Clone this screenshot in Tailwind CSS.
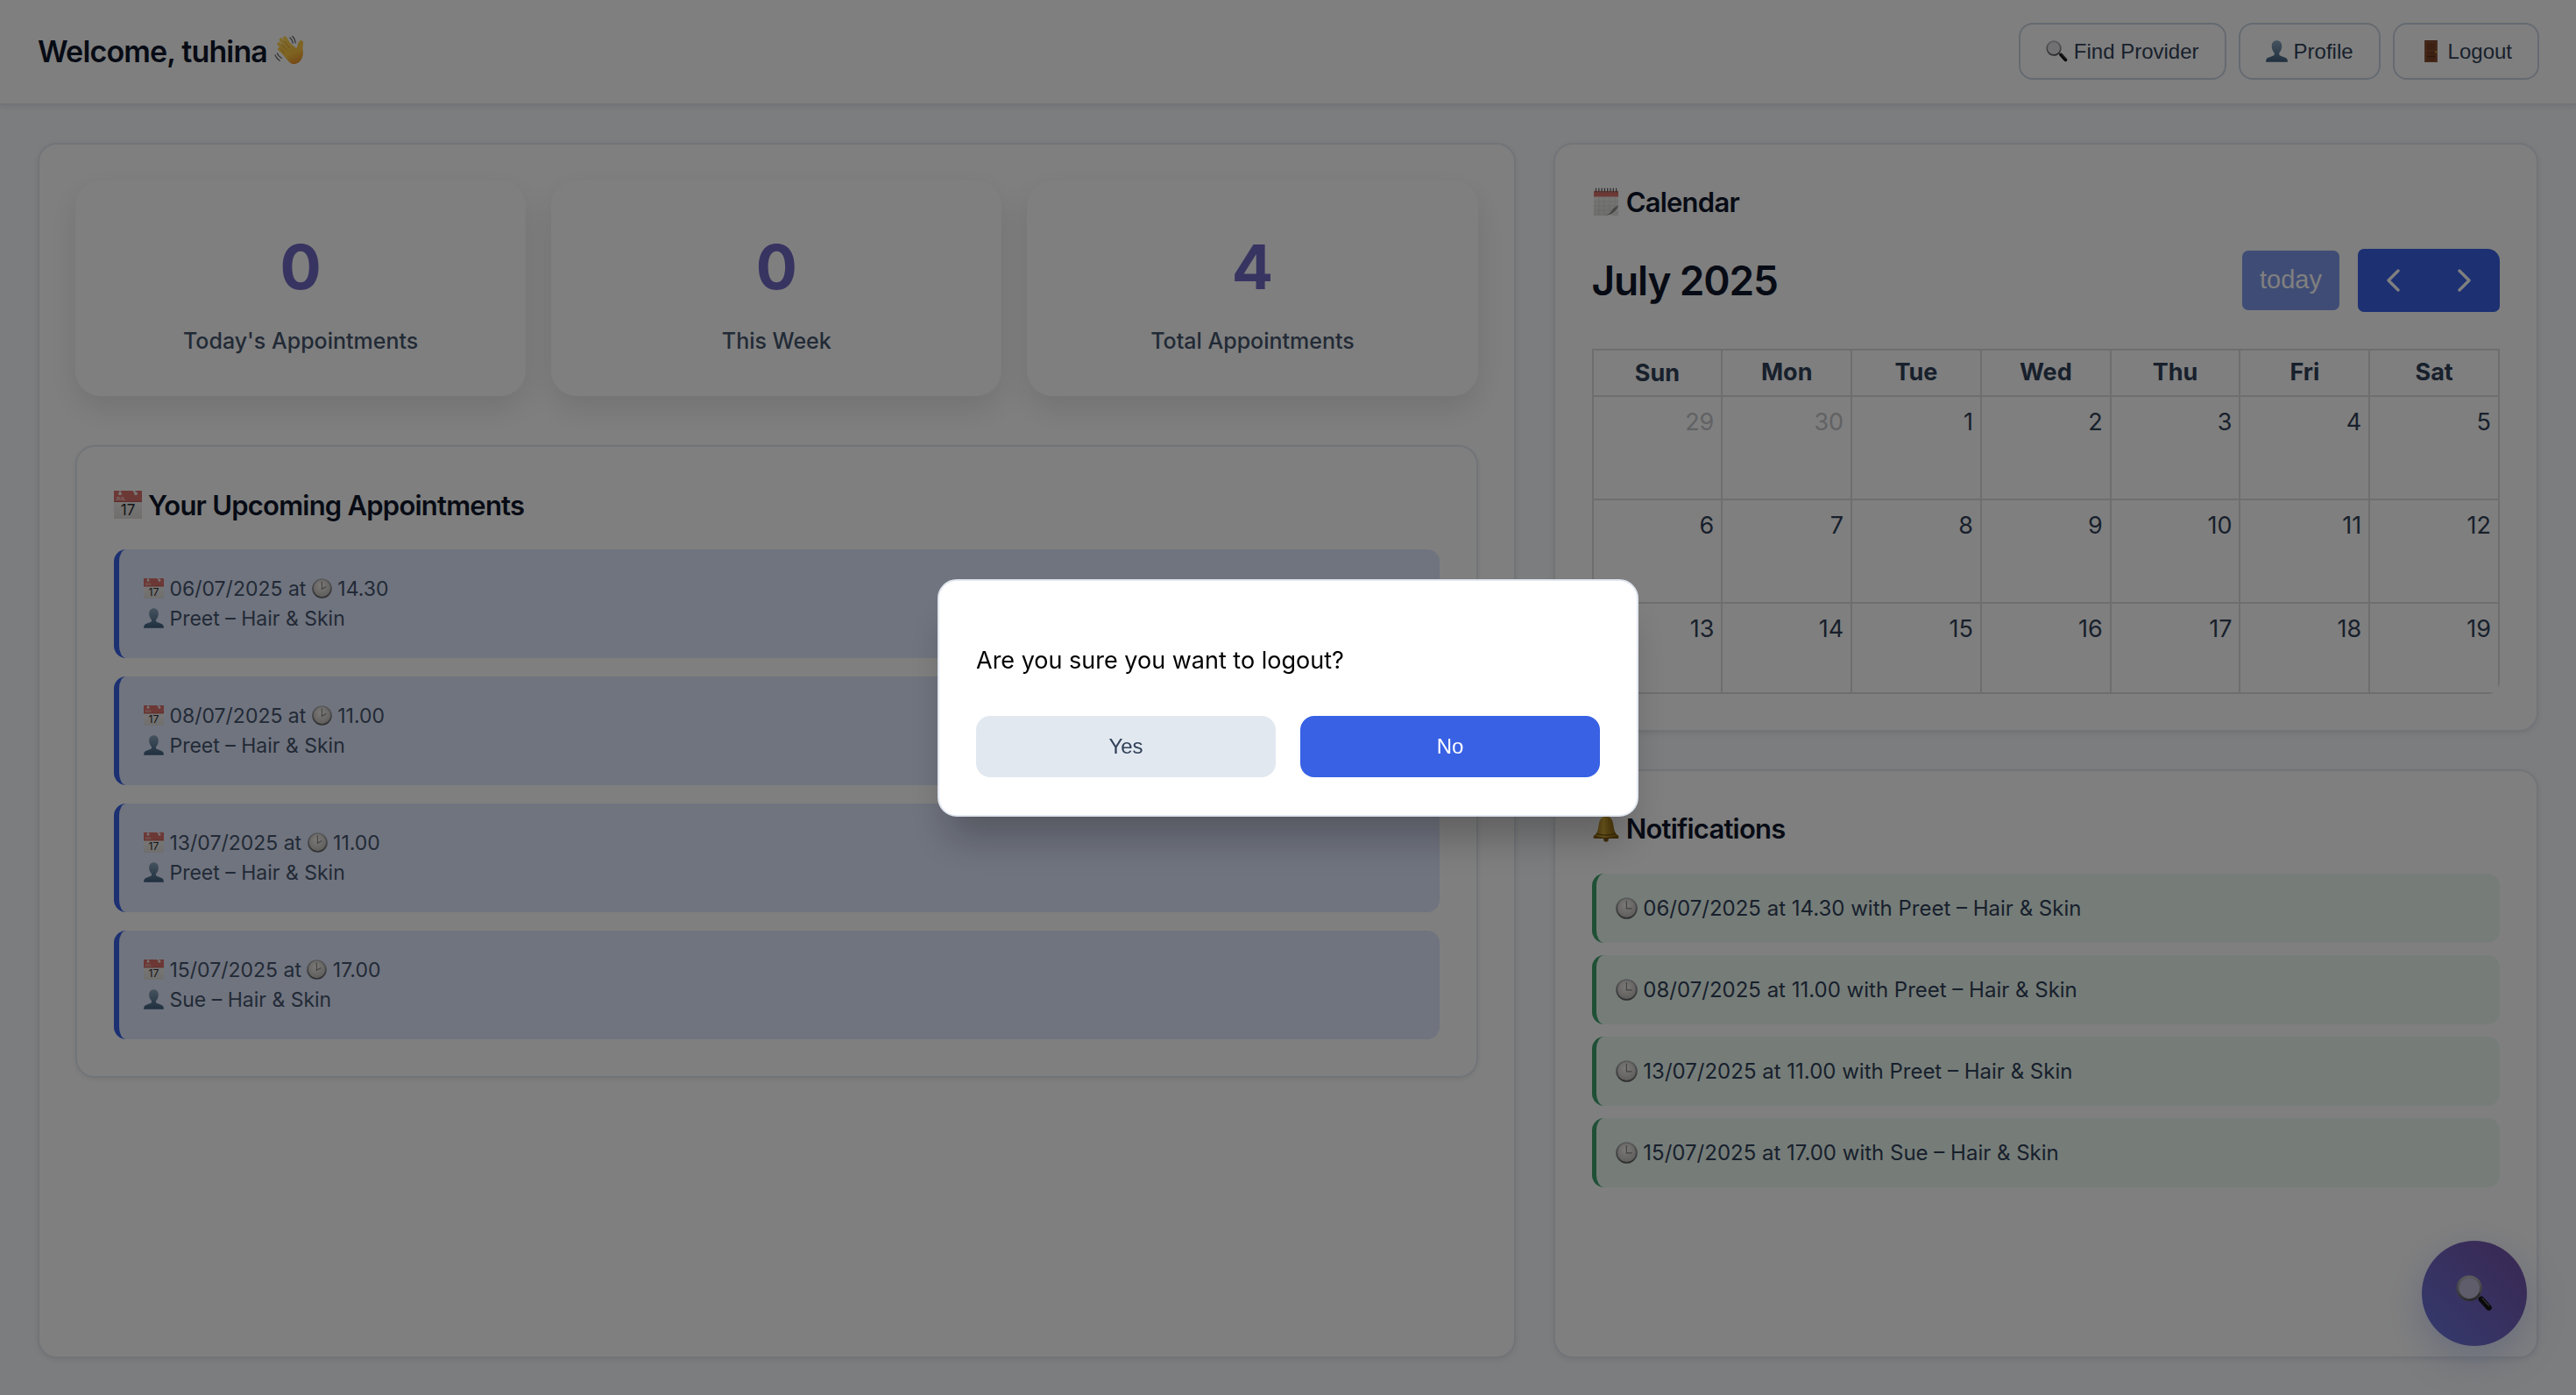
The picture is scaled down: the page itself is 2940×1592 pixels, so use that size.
<!DOCTYPE html>
<html lang="en">
<head>
<meta charset="utf-8">
<meta name="viewport" content="width=device-width, initial-scale=1">
<title>Dashboard</title>
<script src="https://cdn.jsdelivr.net/npm/@tailwindcss/browser@4"></script>
</head>
<body class="font-['Inter','Liberation_Sans',sans-serif] bg-slate-50 text-slate-700">

<!-- Icon library -->
<svg class="absolute size-0" aria-hidden="true">
  <defs>
    <linearGradient id="skin" gradientUnits="userSpaceOnUse" x1="8" y1="2" x2="24" y2="35"><stop offset="0" stop-color="#ffd95e"/><stop offset="0.65" stop-color="#fbc440"/><stop offset="1" stop-color="#ec8f2a"/></linearGradient>
    <linearGradient id="bust" x1="0" y1="0" x2="0" y2="1"><stop offset="0" stop-color="#8aa6bd"/><stop offset="1" stop-color="#3f5f7e"/></linearGradient>
    <linearGradient id="brass" x1="0" y1="0" x2="1" y2="0"><stop offset="0" stop-color="#8f6a16"/><stop offset="0.4" stop-color="#e2b63c"/><stop offset="0.6" stop-color="#b98d22"/><stop offset="1" stop-color="#7c5a12"/></linearGradient>
    <linearGradient id="rim" x1="0" y1="0" x2="0" y2="1"><stop offset="0" stop-color="#b4b6b9"/><stop offset="1" stop-color="#5f6062"/></linearGradient>
    <radialGradient id="dial" cx="0.45" cy="0.35" r="0.65"><stop offset="0" stop-color="#f4f2ee"/><stop offset="1" stop-color="#bdbbb6"/></radialGradient>
    <linearGradient id="page" x1="0" y1="0" x2="0" y2="1"><stop offset="0" stop-color="#efeeec"/><stop offset="1" stop-color="#dedddb"/></linearGradient>
  </defs>
  <symbol id="i-wave" viewBox="0 0 36 36">
    <g fill="none" stroke="url(#skin)" stroke-linecap="round">
      <path d="M14 18 5.500 10.500" stroke-width="4.200"/>
      <path d="M16 16 8 5.500" stroke-width="4.400"/>
      <path d="M19 14 12.500 3.500" stroke-width="4.400"/>
      <path d="M13 22 6 16.500" stroke-width="4"/>
    </g>
    <path fill="url(#skin)" d="M6 18 Q4.500 16 6 14.500 L17 8 L24.500 14.500 Q26.500 16.500 27 13 Q27.500 9 30 6.800 Q32 5.200 33.500 7.200 Q34.500 9 33.600 12.500 Q33.200 16 33.800 19.500 Q34.500 27 29 32 Q23 36.500 17.500 31.500 Z"/>
    <path fill="none" stroke="#c98420" stroke-width="0.700" stroke-linecap="round" d="M8 17 12 20.500M8.500 11.500 14.500 17M11.500 7 18 15"/>
    <path fill="none" stroke="#5e5e5e" stroke-width="1.300" stroke-linecap="round" d="M21.500 1.500Q24.500 4.500 25 9M18.500 3Q21.500 5.500 22 9.500M1 23.500Q2.500 27.500 6.500 30M3.500 21.500Q5 25 8.500 27"/>
  </symbol>
  <symbol id="i-search" viewBox="0 0 36 36">
    <path stroke="#6d6d6d" stroke-width="2" d="m20.500 20.500 4 4"/>
    <path stroke="#141414" stroke-width="5.600" stroke-linecap="round" d="m24.800 23.800 7.400 8.200"/>
    <path stroke="#666" stroke-width="1" stroke-linecap="round" d="m25.600 22.800 6.600 7.200"/>
    <circle cx="13" cy="13" r="11.300" fill="#d9d6df" fill-opacity="0.750" stroke="url(#rim)" stroke-width="2.400"/>
    <path fill="none" stroke="#3c3c3c" stroke-width="0.800" d="M23.500 17.500A11.600 11.600 0 0 1 13 24.800"/>
  </symbol>
  <symbol id="i-user" viewBox="0 0 36 36">
    <path fill="url(#bust)" d="M18 .500c5.200 0 8.300 3.900 8.300 9.300 0 4.300-1.600 8-3.900 10.200-.6.600-.7 3.600.2 4.400 2.400 1.900 10.900 3.100 12.500 6.600.6 1.400.7 3 .7 4.700H.200c0-1.700.1-3.300.7-4.700 1.600-3.500 10.100-4.700 12.500-6.600.9-.8.800-3.800.2-4.400-2.300-2.200-3.900-5.900-3.900-10.200C9.700 4.400 12.800.500 18 .500Z"/>
  </symbol>
  <symbol id="i-door" viewBox="0 0 36 36">
    <path fill="#6e3a22" d="M7.500 0h21v36h-21z"/>
    <path fill="#8d5030" d="M9 1.500h18V36H9z"/>
    <path fill="#794125" d="M11 4h14v12.500H11z"/>
    <path fill="#5c2f1a" d="M11 19h14v1.400H11zM11 26h14v1.400H11z"/>
    <path fill="#794125" d="M11 20.500h14V26H11zM11 27.500h14v6H11z"/>
    <circle cx="26.500" cy="19" r="1.800" fill="#c99a3c"/>
  </symbol>
  <symbol id="i-date" viewBox="0 0 32 32">
    <path fill="url(#page)" d="M0 12h32v20H0z"/>
    <path fill="#d9716b" d="M0 0h32v13H0z"/>
    <path fill="#b55a55" d="M0 11.800h32v1H0z"/>
    <g fill="#f3efee"><circle cx="7" cy="3.300" r="1.900"/><path d="M6.300 0h1.400v3H6.300z"/><circle cx="25" cy="3.300" r="1.900"/><path d="M21 0h3l2 2.500-1.500.8z"/></g>
  </symbol>
  <symbol id="i-spiral" viewBox="0 0 32 32">
    <path fill="url(#page)" d="M2 9h28v14q-5 7-15 9H2z"/>
    <path fill="#d9716b" d="M2 4h28v6.500H2z"/>
    <path stroke="#555" stroke-width="1.200" stroke-linecap="round" d="M4.500 1v4M7.800 1v4M11.100 1v4M14.400 1v4M17.700 1v4M21 1v4M24.300 1v4M27.600 1v4"/>
    <path stroke="#cfcfcf" stroke-width="0.600" fill="none" d="M2 16h28M2 21h28M2 26h20M8 10.500V32M14 10.500V32M20 10.500V28M26 10.500V24"/>
    <path fill="#8f8f8f" d="M30 20.500C26 22 23.500 24 22 27q-2 3.500-8 5 8-.5 12-4.500 3-3 4-7z"/>
    <path fill="#e2e1df" d="M30 23.500q-2.500 5.500-9 8.500h9z"/>
  </symbol>
  <symbol id="i-clock-two" viewBox="0 0 32 32">
    <circle cx="16" cy="16" r="14.600" fill="url(#dial)" stroke="url(#rim)" stroke-width="2.400"/>
    <path fill="none" stroke="#85837e" stroke-width="1.500" d="M15.800 5v12l6.800-3.800"/>
  </symbol>
  <symbol id="i-clock-three" viewBox="0 0 32 32">
    <circle cx="16" cy="16" r="14.600" fill="url(#dial)" stroke="url(#rim)" stroke-width="2.400"/>
    <path fill="none" stroke="#85837e" stroke-width="1.500" d="M15.800 5v11.500h8"/>
  </symbol>
  <symbol id="i-bell" viewBox="0 0 32 32">
    <circle cx="16" cy="2.600" r="1.900" fill="#b98d22"/>
    <circle cx="16" cy="29" r="2.800" fill="#7f5a18"/>
    <path fill="url(#brass)" d="M16 2.500c5.400 0 7.600 4.500 8.300 9.500.7 5.500 1.500 9.500 5.200 12.200 1.600 1.200 1.300 3.800-1 3.800H3.500c-2.300 0-2.600-2.600-1-3.800C6.200 21.500 7 17.500 7.700 12 8.400 7 10.600 2.500 16 2.500Z"/>
    <path fill="none" stroke="#6b4c10" stroke-width="1.200" d="M5.500 22.500q10.500 3.200 21 0M2.800 26.200q13.200 2.600 26.400 0"/>
  </symbol>
</svg>

<div class="min-h-screen flex flex-col">
  <header class="flex items-center justify-between bg-white border-b-2 border-slate-200 pl-[43px] pr-[42px] pt-[26px] pb-[27px] shadow-[0_2px_6px_rgba(0,0,0,0.08)]">
    <h1 class="text-[34px] leading-[54px] font-semibold tracking-tight text-slate-900">Welcome, tuhina <svg class="inline-block size-[35px] align-[-4px]" aria-hidden="true"><use href="#i-wave"/></svg></h1>
    <nav class="flex gap-[14px] font-['Liberation_Sans',sans-serif]">
      <button class="flex items-center gap-[7px] h-[65px] px-[29px] rounded-[16px] border-2 border-slate-300 bg-white text-[24px]"><svg class="size-[25px]" aria-hidden="true"><use href="#i-search"/></svg>Find Provider</button>
      <button class="flex items-center gap-[7px] h-[65px] px-[29px] rounded-[16px] border-2 border-slate-300 bg-white text-[24px]"><svg class="size-[25px]" aria-hidden="true"><use href="#i-user"/></svg>Profile</button>
      <button class="flex items-center gap-[7px] h-[65px] px-[29px] rounded-[16px] border-2 border-slate-300 bg-white text-[24px]"><svg class="size-[25px]" aria-hidden="true"><use href="#i-door"/></svg>Logout</button>
    </nav>
  </header>

  <main class="flex-1 grid grid-cols-[3fr_2fr] gap-[43px] p-[43px]">
    <section class="min-w-0 bg-white border-2 border-slate-200 rounded-[22px] p-[41px] shadow-[0_2px_6px_rgba(0,0,0,0.08)]">
      <div class="grid grid-cols-3 gap-[29px] mb-[56px] text-center">
        <div class="bg-white rounded-[29px] p-[43px] shadow-[0_14px_36px_rgba(0,0,0,0.11)]">
          <p class="text-[70px] leading-[112px] font-bold text-[#7068c2]">0</p>
          <p class="mt-[8px] text-[25px] leading-[40px] font-medium text-slate-600">Today's Appointments</p>
        </div>
        <div class="bg-white rounded-[29px] p-[43px] shadow-[0_14px_36px_rgba(0,0,0,0.11)]">
          <p class="text-[70px] leading-[112px] font-bold text-[#7068c2]">0</p>
          <p class="mt-[8px] text-[25px] leading-[40px] font-medium text-slate-600">This Week</p>
        </div>
        <div class="bg-white rounded-[29px] p-[43px] shadow-[0_14px_36px_rgba(0,0,0,0.11)]">
          <p class="text-[70px] leading-[112px] font-bold text-[#7068c2]">4</p>
          <p class="mt-[8px] text-[25px] leading-[40px] font-medium text-slate-600">Total Appointments</p>
        </div>
      </div>

      <section class="bg-white border-2 border-slate-200 rounded-[22px] p-[42px] shadow-[0_2px_6px_rgba(0,0,0,0.08)]">
        <h2 class="mb-[25px] text-[31px] leading-[50px] font-semibold tracking-tight text-slate-900"><svg class="inline-block size-[32px] align-[-4px]" viewBox="0 0 32 32" aria-hidden="true"><use href="#i-date"/><text x="2" y="11" font-family="Liberation Sans, sans-serif" font-size="6" letter-spacing="0" fill="#f6dedd">JUL</text><text x="16" y="28" text-anchor="middle" letter-spacing="0" font-family="Inter, sans-serif" font-size="17" font-weight="400" fill="#2b2b2b">17</text></svg> Your Upcoming Appointments</h2>
        <ul class="flex flex-col gap-[21px] text-[23px] leading-[34px] text-slate-600">
          <li class="bg-[#e0e8ff] border-l-6 border-[#3861e4] rounded-[14px] p-[28px]">
            <p><svg class="inline-block size-[23px] align-[-3px]" viewBox="0 0 32 32" aria-hidden="true"><use href="#i-date"/><text x="2" y="11" font-family="Liberation Sans, sans-serif" font-size="6" fill="#f6dedd">JUL</text><text x="16" y="28" text-anchor="middle" font-family="Inter, sans-serif" font-size="17" fill="#2b2b2b">17</text></svg> 06/07/2025 at <svg class="inline-block size-[23px] align-[-3px]" aria-hidden="true"><use href="#i-clock-two"/></svg> 14.30</p>
            <p><svg class="inline-block size-[23px] align-[-3px]" aria-hidden="true"><use href="#i-user"/></svg> Preet – Hair &amp; Skin</p>
          </li>
          <li class="bg-[#e0e8ff] border-l-6 border-[#3861e4] rounded-[14px] p-[28px]">
            <p><svg class="inline-block size-[23px] align-[-3px]" viewBox="0 0 32 32" aria-hidden="true"><use href="#i-date"/><text x="2" y="11" font-family="Liberation Sans, sans-serif" font-size="6" fill="#f6dedd">JUL</text><text x="16" y="28" text-anchor="middle" font-family="Inter, sans-serif" font-size="17" fill="#2b2b2b">17</text></svg> 08/07/2025 at <svg class="inline-block size-[23px] align-[-3px]" aria-hidden="true"><use href="#i-clock-two"/></svg> 11.00</p>
            <p><svg class="inline-block size-[23px] align-[-3px]" aria-hidden="true"><use href="#i-user"/></svg> Preet – Hair &amp; Skin</p>
          </li>
          <li class="bg-[#e0e8ff] border-l-6 border-[#3861e4] rounded-[14px] p-[28px]">
            <p><svg class="inline-block size-[23px] align-[-3px]" viewBox="0 0 32 32" aria-hidden="true"><use href="#i-date"/><text x="2" y="11" font-family="Liberation Sans, sans-serif" font-size="6" fill="#f6dedd">JUL</text><text x="16" y="28" text-anchor="middle" font-family="Inter, sans-serif" font-size="17" fill="#2b2b2b">17</text></svg> 13/07/2025 at <svg class="inline-block size-[23px] align-[-3px]" aria-hidden="true"><use href="#i-clock-two"/></svg> 11.00</p>
            <p><svg class="inline-block size-[23px] align-[-3px]" aria-hidden="true"><use href="#i-user"/></svg> Preet – Hair &amp; Skin</p>
          </li>
          <li class="bg-[#e0e8ff] border-l-6 border-[#3861e4] rounded-[14px] p-[28px]">
            <p><svg class="inline-block size-[23px] align-[-3px]" viewBox="0 0 32 32" aria-hidden="true"><use href="#i-date"/><text x="2" y="11" font-family="Liberation Sans, sans-serif" font-size="6" fill="#f6dedd">JUL</text><text x="16" y="28" text-anchor="middle" font-family="Inter, sans-serif" font-size="17" fill="#2b2b2b">17</text></svg> 15/07/2025 at <svg class="inline-block size-[23px] align-[-3px]" aria-hidden="true"><use href="#i-clock-two"/></svg> 17.00</p>
            <p><svg class="inline-block size-[23px] align-[-3px]" aria-hidden="true"><use href="#i-user"/></svg> Sue – Hair &amp; Skin</p>
          </li>
        </ul>
      </section>
    </section>

    <div class="min-w-0 grid grid-rows-2 gap-[43px]">
      <section class="flex flex-col bg-white border-2 border-slate-200 rounded-[22px] px-[42px] py-[41px] shadow-[0_2px_6px_rgba(0,0,0,0.08)]">
        <h2 class="mb-[28px] text-[31px] leading-[50px] font-semibold tracking-tight text-slate-900"><svg class="inline-block size-[32px] align-[-4px]" aria-hidden="true"><use href="#i-spiral"/></svg> Calendar</h2>
        <div class="flex-1 flex flex-col overflow-hidden rounded-[14px]">
          <div class="flex items-center justify-between mb-[42px]">
            <h3 class="text-[46px] leading-[72px] font-semibold tracking-tight text-slate-900">July 2025</h3>
            <div class="flex items-center gap-[21px] text-white text-[29px] font-['Liberation_Sans',sans-serif]">
              <button class="h-[68px] px-[20px] rounded-[7px] bg-[#7e98ea]" disabled>today</button>
              <div class="flex h-[72px] rounded-[7px] overflow-hidden bg-[#3861e4]">
                <button class="w-[81px] flex items-center justify-center" aria-label="Previous month"><svg class="w-[15px] h-[26px]" viewBox="0 0 15 26" fill="none" stroke="currentColor" stroke-width="3.400" stroke-linecap="round" stroke-linejoin="round"><path d="M13 2 2 13l11 11"/></svg></button>
                <button class="w-[81px] flex items-center justify-center" aria-label="Next month"><svg class="w-[15px] h-[26px]" viewBox="0 0 15 26" fill="none" stroke="currentColor" stroke-width="3.400" stroke-linecap="round" stroke-linejoin="round"><path d="m2 2 11 11L2 24"/></svg></button>
              </div>
            </div>
          </div>
          <div class="flex-1">
            <table class="w-full table-fixed border-collapse text-[27px]">
              <thead>
                <tr class="h-[53px]">
                  <th class="border-2 border-[#ddd] font-bold leading-[45px]">Sun</th><th class="border-2 border-[#ddd] font-bold">Mon</th><th class="border-2 border-[#ddd] font-bold">Tue</th><th class="border-2 border-[#ddd] font-bold">Wed</th><th class="border-2 border-[#ddd] font-bold">Thu</th><th class="border-2 border-[#ddd] font-bold">Fri</th><th class="border-2 border-[#ddd] font-bold">Sat</th>
                </tr>
              </thead>
              <tbody class="text-right leading-[46px]">
                <tr class="h-[118px] align-top">
                  <td class="border-2 border-[#ddd] px-[8px] py-[6px] text-[#c2c4c8]">29</td><td class="border-2 border-[#ddd] px-[8px] py-[6px] text-[#c2c4c8]">30</td><td class="border-2 border-[#ddd] px-[8px] py-[6px]">1</td><td class="border-2 border-[#ddd] px-[8px] py-[6px]">2</td><td class="border-2 border-[#ddd] px-[8px] py-[6px]">3</td><td class="border-2 border-[#ddd] px-[8px] py-[6px]">4</td><td class="border-2 border-[#ddd] px-[8px] py-[6px]">5</td>
                </tr>
                <tr class="h-[118px] align-top">
                  <td class="border-2 border-[#ddd] px-[8px] py-[6px]">6</td><td class="border-2 border-[#ddd] px-[8px] py-[6px]">7</td><td class="border-2 border-[#ddd] px-[8px] py-[6px]">8</td><td class="border-2 border-[#ddd] px-[8px] py-[6px]">9</td><td class="border-2 border-[#ddd] px-[8px] py-[6px]">10</td><td class="border-2 border-[#ddd] px-[8px] py-[6px]">11</td><td class="border-2 border-[#ddd] px-[8px] py-[6px]">12</td>
                </tr>
                <tr class="h-[103px] align-top">
                  <td class="border-2 border-[#ddd] px-[8px] py-[6px]">13</td><td class="border-2 border-[#ddd] px-[8px] py-[6px]">14</td><td class="border-2 border-[#ddd] px-[8px] py-[6px]">15</td><td class="border-2 border-[#ddd] px-[8px] py-[6px]">16</td><td class="border-2 border-[#ddd] px-[8px] py-[6px]">17</td><td class="border-2 border-[#ddd] px-[8px] py-[6px]">18</td><td class="border-2 border-[#ddd] px-[8px] py-[6px]">19</td>
                </tr>
              </tbody>
            </table>
          </div>
        </div>
      </section>

      <section class="bg-white border-2 border-slate-200 rounded-[22px] px-[42px] py-[41px] shadow-[0_2px_6px_rgba(0,0,0,0.08)]">
        <h2 class="mb-[26px] text-[31px] leading-[50px] font-semibold tracking-tight text-slate-900"><svg class="inline-block size-[32px] align-[-4px]" aria-hidden="true"><use href="#i-bell"/></svg> Notifications</h2>
        <ul class="flex flex-col gap-[14px] text-[24px] leading-[39px]">
          <li class="bg-[#ecfaf2] border-l-5 border-[#3fa06d] rounded-[14px] px-[22px] py-[20px]"><svg class="inline-block size-[25px] align-[-4px]" aria-hidden="true"><use href="#i-clock-three"/></svg> 06/07/2025 at 14.30 with Preet – Hair &amp; Skin</li>
          <li class="bg-[#ecfaf2] border-l-5 border-[#3fa06d] rounded-[14px] px-[22px] py-[20px]"><svg class="inline-block size-[25px] align-[-4px]" aria-hidden="true"><use href="#i-clock-three"/></svg> 08/07/2025 at 11.00 with Preet – Hair &amp; Skin</li>
          <li class="bg-[#ecfaf2] border-l-5 border-[#3fa06d] rounded-[14px] px-[22px] py-[20px]"><svg class="inline-block size-[25px] align-[-4px]" aria-hidden="true"><use href="#i-clock-three"/></svg> 13/07/2025 at 11.00 with Preet – Hair &amp; Skin</li>
          <li class="bg-[#ecfaf2] border-l-5 border-[#3fa06d] rounded-[14px] px-[22px] py-[20px]"><svg class="inline-block size-[25px] align-[-4px]" aria-hidden="true"><use href="#i-clock-three"/></svg> 15/07/2025 at 17.00 with Sue – Hair &amp; Skin</li>
        </ul>
      </section>
    </div>
  </main>
</div>

<!-- Floating search button -->
<button class="fixed right-[56px] bottom-[56px] size-[120px] rounded-full bg-linear-45 from-[#6675dc] to-[#744fa4] flex items-center justify-center shadow-[0_14px_45px_rgba(102,126,234,0.3)]" aria-label="Find provider"><svg class="size-[42px]" aria-hidden="true"><use href="#i-search"/></svg></button>

<!-- Logout confirmation -->
<div class="fixed inset-0 flex items-center justify-center bg-black/50">
  <div role="dialog" aria-modal="true" aria-labelledby="logout-question" class="w-[800px] bg-white border-2 border-slate-200 rounded-[22px] px-[42px] pt-[68px] pb-[43px] shadow-[0_36px_45px_-12px_rgba(0,0,0,0.25)]">
    <p id="logout-question" class="mb-[40px] text-[27px] leading-[46px] text-black">Are you sure you want to logout?</p>
    <div class="grid grid-cols-2 gap-[28px] text-[24px] font-['Liberation_Sans',sans-serif]">
      <button class="h-[70px] rounded-[16px] bg-slate-200 text-slate-700">Yes</button>
      <button class="h-[70px] rounded-[16px] bg-[#3861e4] text-white">No</button>
    </div>
  </div>
</div>

</body>
</html>
